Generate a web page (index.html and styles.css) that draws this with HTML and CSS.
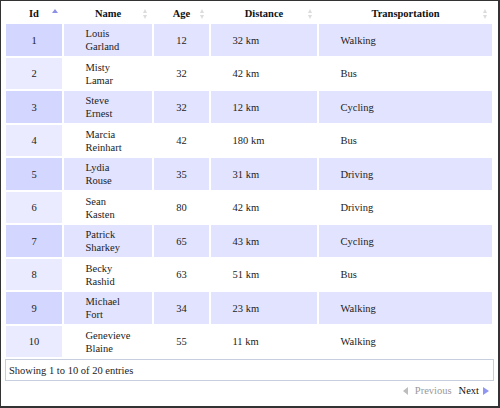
FILE: index.html
```
<!DOCTYPE html>
<html>
<head>
<meta charset="utf-8">
<link rel="stylesheet" href="styles.css">
</head>
<body>
<div class="frame">
  <table class="display">
    <colgroup>
      <col class="c-id">
      <col class="c-name">
      <col class="c-age">
      <col class="c-dist">
      <col class="c-trans">
    </colgroup>
    <thead>
      <tr>
        <th class="sort-asc">Id</th>
        <th class="sort-both">Name</th>
        <th class="sort-both">Age</th>
        <th class="sort-both">Distance</th>
        <th class="sort-both">Transportation</th>
      </tr>
    </thead>
    <tbody>
      <tr class="odd"><td class="sorted num">1</td><td class="txt name">Louis Garland</td><td class="num">12</td><td class="txt">32 km</td><td class="txt">Walking</td></tr>
      <tr class="even"><td class="sorted num">2</td><td class="txt name">Misty Lamar</td><td class="num">32</td><td class="txt">42 km</td><td class="txt">Bus</td></tr>
      <tr class="odd"><td class="sorted num">3</td><td class="txt name">Steve Ernest</td><td class="num">32</td><td class="txt">12 km</td><td class="txt">Cycling</td></tr>
      <tr class="even"><td class="sorted num">4</td><td class="txt name">Marcia Reinhart</td><td class="num">42</td><td class="txt">180 km</td><td class="txt">Bus</td></tr>
      <tr class="odd"><td class="sorted num">5</td><td class="txt name">Lydia Rouse</td><td class="num">35</td><td class="txt">31 km</td><td class="txt">Driving</td></tr>
      <tr class="even"><td class="sorted num">6</td><td class="txt name">Sean Kasten</td><td class="num">80</td><td class="txt">42 km</td><td class="txt">Driving</td></tr>
      <tr class="odd"><td class="sorted num">7</td><td class="txt name">Patrick Sharkey</td><td class="num">65</td><td class="txt">43 km</td><td class="txt">Cycling</td></tr>
      <tr class="even"><td class="sorted num">8</td><td class="txt name">Becky Rashid</td><td class="num">63</td><td class="txt">51 km</td><td class="txt">Bus</td></tr>
      <tr class="odd"><td class="sorted num">9</td><td class="txt name">Michael Fort</td><td class="num">34</td><td class="txt">23 km</td><td class="txt">Walking</td></tr>
      <tr class="even"><td class="sorted num">10</td><td class="txt name">Genevieve Blaine</td><td class="num">55</td><td class="txt">11 km</td><td class="txt">Walking</td></tr>
    </tbody>
  </table>
  <div class="info">Showing 1 to 10 of 20 entries</div>
  <div class="paginate">
    <span class="prev">Previous</span>
    <span class="next">Next</span>
  </div>
</div>
</body>
</html>
```
FILE: styles.css
```
html, body {
  margin: 0;
  padding: 0;
  background: #fff;
}

.frame {
  box-sizing: border-box;
  width: 500px;
  height: 408px;
  border-style: solid;
  border-color: #333;
  border-width: 1px 2px 2px 1px;
  padding: 0 4px 0 3px;
  font-family: "Liberation Serif", "Times New Roman", serif;
  font-size: 10.5px;
  line-height: 13px;
  color: #222;
}

.display {
  width: 490px;
  table-layout: fixed;
  border-collapse: separate;
  border-spacing: 2px;
  font-family: "Liberation Serif", "Times New Roman", serif;
  font-size: 10.5px;
}

.c-id { width: 56px; }
.c-name { width: 88px; }
.c-age { width: 55px; }
.c-dist { width: 106px; }
.c-trans { width: 173px; }

.display thead tr { height: 19px; }
.display tbody tr.odd { height: 32px; }
.display tbody tr.even { height: 31px; }

.display th {
  position: relative;
  padding: 4px 10px 1px;
  font-weight: bold;
  text-align: center;
  color: #111;
  line-height: 14px;
}

.sort-asc::after {
  content: "";
  position: absolute;
  right: 4px;
  top: 6px;
  width: 0;
  height: 0;
  border-left: 3px solid transparent;
  border-right: 3px solid transparent;
  border-bottom: 4px solid #8c90e6;
}

.sort-both::before,
.sort-both::after {
  content: "";
  position: absolute;
  right: 5px;
  width: 0;
  height: 0;
  border-left: 2.5px solid transparent;
  border-right: 2.5px solid transparent;
}

.sort-both::before {
  top: 6px;
  border-bottom: 4px solid #dcdcdc;
}

.sort-both::after {
  top: 12px;
  border-top: 4px solid #dcdcdc;
}

.display td {
  padding: 3px 10px;
  vertical-align: middle;
}

.display tr.even td {
  padding-top: 2.5px;
  padding-bottom: 2.5px;
}

.display td.num { text-align: center; }
.display td.txt { text-align: left; padding-left: 21.5px; }
.display td.name { padding-right: 15px; }

.odd td { background: #e2e4ff; }
.odd td.sorted { background: #d3d6ff; }
.even td { background: #fff; }
.even td.sorted { background: #eaebff; }

.info {
  box-sizing: border-box;
  height: 22px;
  margin: 0 0 0 1px;
  width: 489px;
  border: 1px solid #c7cfdf;
  padding: 4px 3px;
  line-height: 13px;
}

.paginate {
  display: flex;
  justify-content: flex-end;
  align-items: center;
  gap: 7px;
  padding: 3px 5px 0 0;
  line-height: 13px;
}

.prev {
  display: flex;
  align-items: center;
  gap: 7px;
  color: #999;
}

.prev::before {
  content: "";
  width: 0;
  height: 0;
  border-top: 4px solid transparent;
  border-bottom: 4px solid transparent;
  border-right: 5px solid #bdbdbd;
}

.next {
  display: flex;
  align-items: center;
  gap: 4px;
  color: #111;
}

.next::after {
  content: "";
  width: 0;
  height: 0;
  border-top: 4px solid transparent;
  border-bottom: 4px solid transparent;
  border-left: 6px solid #8f95f3;
}
```
